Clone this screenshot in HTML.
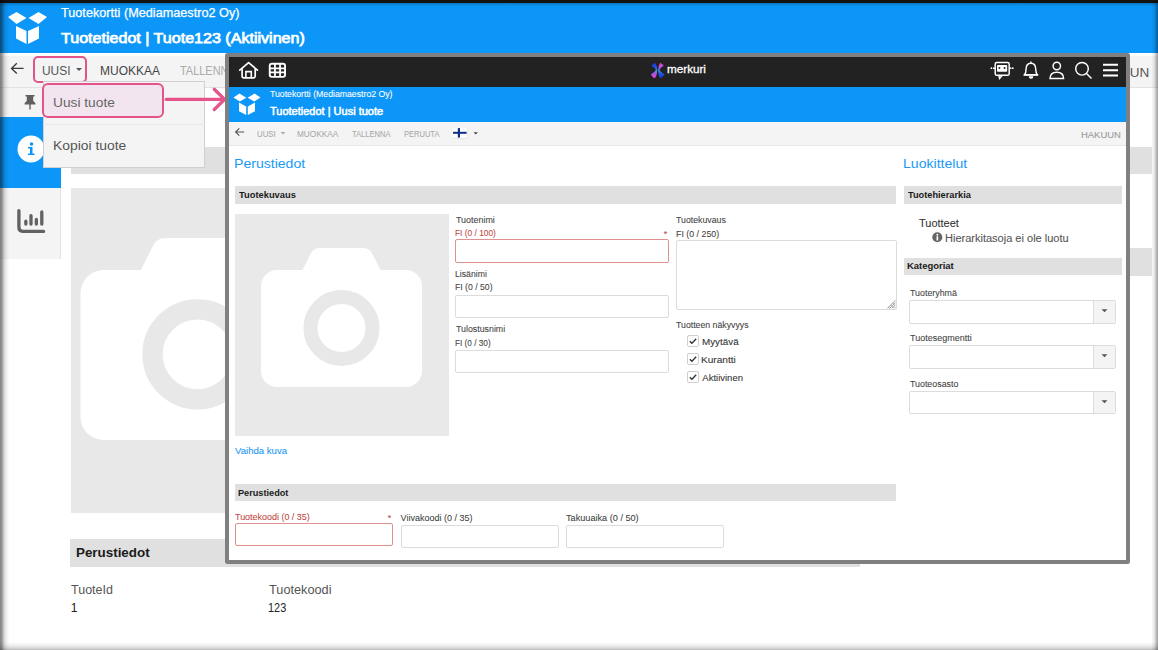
<!DOCTYPE html>
<html><head><meta charset="utf-8"><style>
html,body{margin:0;padding:0;}
body{width:1158px;height:650px;overflow:hidden;position:relative;background:#fff;font-family:"Liberation Sans",sans-serif;}
.a{position:absolute;}
.t{position:absolute;white-space:nowrap;line-height:1;transform-origin:0 0;}
#shL{position:absolute;left:0;top:0;width:10px;height:650px;background:linear-gradient(to right,rgba(0,0,0,.48) 0,rgba(0,0,0,.44) 1.5px,rgba(0,0,0,.2) 3.8px,rgba(0,0,0,.07) 6px,rgba(0,0,0,0) 9.5px);}
#shR{position:absolute;right:0;top:0;width:7px;height:650px;background:linear-gradient(to left,rgba(0,0,0,.38) 0,rgba(0,0,0,.28) 1.5px,rgba(0,0,0,.1) 3.5px,rgba(0,0,0,0) 6.5px);}
#shB{position:absolute;left:0;bottom:0;width:1158px;height:9px;background:linear-gradient(to top,rgba(0,0,0,.28) 0,rgba(0,0,0,.15) 2px,rgba(0,0,0,.05) 5px,rgba(0,0,0,0) 8.5px);}
#shT{position:absolute;left:0;top:3px;width:1158px;height:4px;background:linear-gradient(to bottom,rgba(0,0,0,.2) 0,rgba(0,0,0,0) 3.5px);}
</style></head><body>
<div class="a" style="left:0px;top:0px;width:1158px;height:3px;background:#121212;"></div>
<div class="a" style="left:0px;top:3px;width:1158px;height:50px;background:#0c96f8;"></div>
<svg class="a" style="left:0;top:0" width="60" height="53" viewBox="0 0 60 53">
<path fill="#fff" d="M8 17 L16.5 12 L26.5 18 L16.5 24 Z"/>
<path fill="#fff" d="M28.5 18 L38.5 12 L47 17 L38.5 24 Z"/>
<path fill="#fff" d="M16 26 L26.5 31 L26.5 44 L16 38.5 Z"/>
<path fill="#fff" d="M28 31 L39 26 L39 38.5 L28 44 Z"/>
</svg><div class="t" style="left:60.75px;top:7.00px;font-size:12.5px;color:#fff;transform:scaleX(1.0141);-webkit-text-stroke:0.25px #fff;">Tuotekortti (Mediamaestro2 Oy)</div>
<div class="t" style="left:60.68px;top:30.00px;font-size:15px;color:#fff;transform:scaleX(1.0710);-webkit-text-stroke:0.75px #fff;">Tuotetiedot | Tuote123 (Aktiivinen)</div>
<div class="a" style="left:0px;top:55.5px;width:1158px;height:31.5px;background:#f4f4f4;"></div>
<div class="a" style="left:0px;top:87px;width:1158px;height:1px;background:#e2e2e2;"></div>
<svg class="a" style="left:8px;top:58px" width="20" height="20" viewBox="0 0 20 20">
<path d="M15.6 10.4 H3.8 M8.8 5.2 L3.5 10.4 L8.8 15.5" stroke="#3a3a3a" stroke-width="1.35" fill="none"/></svg><div class="t" style="left:41.60px;top:65.00px;font-size:12.5px;color:#555;transform:scaleX(0.9550);">UUSI</div>
<svg class="a" style="left:75px;top:68px" width="8" height="4" viewBox="0 0 8 4"><path d="M1 0 L7 0 L4 3 Z" fill="#555"/></svg><div class="a" style="left:33px;top:56px;width:54px;height:26.5px;border:2px solid #e2548a;border-radius:5px;box-sizing:border-box;"></div>
<div class="t" style="left:100.04px;top:65.00px;font-size:12.5px;color:#444;transform:scaleX(0.9593);">MUOKKAA</div>
<div class="t" style="left:180.08px;top:65.00px;font-size:12.5px;color:#aaaaaa;transform:scaleX(0.8757);">TALLENNA</div>
<div class="t" style="left:1092.32px;top:66.00px;font-size:13.5px;color:#555;">HAKUUN</div>
<div class="a" style="left:0px;top:88px;width:61px;height:171px;background:#f4f4f4;border-right:1px solid #e4e4e4;box-sizing:border-box;"></div>
<svg class="a" style="left:22px;top:93px" width="16" height="18" viewBox="0 0 16 18">
<path fill="#606060" d="M3.5 2 H12.5 V3.6 H11.2 V7.8 L13.4 10.2 V11.6 H2.6 V10.2 L4.8 7.8 V3.6 H3.5 Z"/><rect x="7.3" y="11" width="1.4" height="5.5" fill="#606060"/></svg><div class="a" style="left:0px;top:117px;width:61px;height:71px;background:#0c96f8;"></div>
<svg class="a" style="left:17px;top:135px" width="28" height="28" viewBox="0 0 28 28">
<circle cx="14" cy="14" r="13.5" fill="#fff"/>
<circle cx="14.5" cy="9" r="1.8" fill="#0c96f8"/>
<path d="M11 12 H15.5 V18.5 H17.5 V20 H11 V18.5 H13 V13.5 H11 Z" fill="#0c96f8"/></svg><svg class="a" style="left:12px;top:202px" width="40" height="36" viewBox="0 0 40 36">
<g stroke="#626262" stroke-width="3.3" fill="none" stroke-linecap="round">
<path d="M6.9 8.6 V25.6 Q6.9 29.4 10.7 29.4 H31.6"/>
<path d="M13.85 19.2 V22.1 M19 13.6 V22.1 M24.35 17.5 V22.1 M29.8 10 V22.1"/></g></svg><div class="a" style="left:71px;top:147px;width:1081px;height:27px;background:#e0e0e0;"></div>
<div class="a" style="left:1130px;top:248px;width:22px;height:28px;background:#e0e0e0;"></div>
<div class="a" style="left:71px;top:188px;width:254px;height:325px;background:#e8e8e8;"></div>
<svg class="a" style="left:0;top:0;overflow:visible" width="1158" height="650">
<rect x="80.5" y="270.0" width="233.9" height="170.0" rx="23.2" fill="#fff"/>
<path fill="#fff" d="M139.4 272.9 L152.5 246.8 Q156.1 238.0 165.5 238.0 L229.5 238.0 Q238.9 238.0 242.5 246.8 L255.6 272.9 Z"/>
<circle cx="197.5" cy="354.3" r="45.0" fill="none" stroke="#e8e8e8" stroke-width="20.3"/>
</svg><div class="a" style="left:70px;top:539px;width:790px;height:28px;background:#e0e0e0;"></div>
<div class="t" style="left:76.13px;top:546.00px;font-size:13px;color:#1a1a1a;font-weight:bold;transform:scaleX(1.0294);">Perustiedot</div>
<div class="t" style="left:71.45px;top:584.00px;font-size:12px;color:#555;transform:scaleX(1.0423);">TuoteId</div>
<div class="t" style="left:70.80px;top:602.00px;font-size:12px;color:#222;">1</div>
<div class="t" style="left:269.05px;top:584.00px;font-size:12px;color:#555;transform:scaleX(1.0604);">Tuotekoodi</div>
<div class="t" style="left:268.48px;top:602.00px;font-size:12px;color:#222;transform:scaleX(0.9086);">123</div>
<div class="a" style="left:43px;top:81px;width:162px;height:86.5px;background:#f4f4f4;border:1px solid #d0d0d0;box-sizing:border-box;"></div>
<div class="a" style="left:43px;top:124px;width:162px;height:1px;background:#e6e6e6;"></div>
<div class="a" style="left:42px;top:83px;width:122px;height:35px;background:#f3e5ef;border:2px solid #e2548a;border-radius:6px;box-sizing:border-box;"></div>
<div class="t" style="left:52.57px;top:96.00px;font-size:13.3px;color:#666;transform:scaleX(1.0334);">Uusi tuote</div>
<div class="t" style="left:53.29px;top:139.00px;font-size:13px;color:#555;transform:scaleX(1.0669);">Kopioi tuote</div>
<svg class="a" style="left:0;top:0" width="240" height="130" viewBox="0 0 240 130">
<path d="M166.2 99.4 H224" stroke="#e6538a" stroke-width="3.1" fill="none" stroke-linecap="round"/>
<path d="M214.3 89.3 L224.6 99.4 L214.3 109.5" stroke="#e6538a" stroke-width="3.3" fill="none" stroke-linecap="round" stroke-linejoin="round"/></svg><div class="a" style="left:225px;top:53px;width:905px;height:511px;background:#fff;border:4px solid #808080;border-radius:2.5px;box-sizing:border-box;"></div>
<div class="a" style="left:229px;top:57px;width:897px;height:30px;background:#222;"></div>
<svg class="a" style="left:236px;top:59px" width="24" height="22" viewBox="0 0 24 22">
<path d="M3.8 11.2 L12.6 3.6 L21.4 11.2" stroke="#fff" stroke-width="1.7" fill="none" stroke-linecap="round" stroke-linejoin="round"/>
<path d="M6.1 9.5 V17 Q6.1 18.8 7.9 18.8 H17.4 Q19.2 18.8 19.2 17 V9.5" stroke="#fff" stroke-width="1.7" fill="none"/>
<path d="M9.9 18.8 V12.6 H15.3 V18.8" stroke="#fff" stroke-width="1.6" fill="none"/></svg><svg class="a" style="left:267px;top:61px" width="22" height="19" viewBox="0 0 22 19">
<rect x="2.75" y="2.75" width="15.3" height="13.1" rx="2" stroke="#fff" stroke-width="1.9" fill="none"/>
<path d="M7.95 2.5 V16 M13.05 2.5 V16 M2.5 7.4 H18.5 M2.5 11.4 H18.5" stroke="#fff" stroke-width="1.8"/></svg><svg class="a" style="left:648px;top:60px" width="20" height="20" viewBox="0 0 20 20">
<defs><linearGradient id="g1" x1="0" y1="0" x2="0" y2="1"><stop offset="0" stop-color="#1838d8"/><stop offset="0.3" stop-color="#1d55e8"/><stop offset="0.5" stop-color="#3a95f2"/><stop offset="0.72" stop-color="#b050e0"/><stop offset="1" stop-color="#f040c8"/></linearGradient>
<linearGradient id="g2" x1="0" y1="0" x2="0" y2="1"><stop offset="0" stop-color="#f040c8"/><stop offset="0.3" stop-color="#b050e0"/><stop offset="0.5" stop-color="#3a95f2"/><stop offset="0.72" stop-color="#1d55e8"/><stop offset="1" stop-color="#1838d8"/></linearGradient></defs>
<path d="M3.3 5.6 L7.2 2.7 Q9.4 6 9.3 10 Q9.2 14 7.7 17.2 L5.8 18.2 L2.8 14.6 Q7 12 8 9.8 Q6.5 7.6 3.3 5.6 Z" fill="url(#g1)"/>
<path d="M15.9 5.6 L12.2 2.8 Q10 6.2 10.1 10 Q10.3 14 11.4 17.6 L13.4 18.1 L16.6 14.4 Q12.3 12 11.4 9.9 Q12.9 7.6 15.9 5.6 Z" fill="url(#g2)"/></svg><div class="t" style="left:667.04px;top:64.00px;font-size:11.5px;color:#fff;transform:scaleX(1.0163);-webkit-text-stroke:0.3px #fff;">merkuri</div>
<svg class="a" style="left:988px;top:58px" width="140" height="26" viewBox="0 0 140 26">
<g stroke="#fff" stroke-width="1.45" fill="none">
<rect x="7.2" y="4.5" width="14" height="12.8" rx="1.6"/>
<path d="M5 10.2 H7.2 M21.2 10.2 H23.4 M10.8 17.3 L11.6 20.5 L14.2 17.3"/>
<path d="M36.6 16.8 Q38 15.2 38 11.5 Q38 5.2 42.9 5.2 Q47.8 5.2 47.8 11.5 Q47.8 15.2 49.2 16.8 Z M42.9 3.6 V5.2" stroke-linejoin="round"/>
<path d="M35.5 17 H50.3"/>
<circle cx="68.8" cy="8" r="3.7"/>
<path d="M62 20.5 Q62 14.2 68.8 14.2 Q75.6 14.2 75.6 20.5 Z"/>
<circle cx="94" cy="10.8" r="6.3"/>
<path d="M98.5 15.5 L103.5 20.5"/>
</g>
<rect x="9" y="7" width="10.2" height="6.8" rx="0.8" fill="#fff"/>
<circle cx="11.4" cy="10" r="0.95" fill="#222"/><circle cx="16.6" cy="10" r="0.95" fill="#222"/>
<circle cx="3.4" cy="10.2" r="0.9" fill="#fff"/><circle cx="24.8" cy="10.2" r="0.9" fill="#fff"/>
<path d="M40.8 18.3 Q40.8 20.8 43 20.8 Q45.3 20.8 45.3 18.3 Z" fill="#fff"/>
<path d="M115 6.7 H130 M115 12.3 H130 M115 17.5 H130" stroke="#fff" stroke-width="2"/>
</svg><div class="a" style="left:229px;top:87px;width:897px;height:35px;background:#0c96f8;"></div>
<svg class="a" style="left:229px;top:87px" width="36" height="35" viewBox="0 0 36 35">
<path fill="#fff" d="M4.5 10.5 L10.5 6.5 L17.3 10.8 L10.8 14.5 Z"/>
<path fill="#fff" d="M18.7 10.8 L25.5 6.5 L31.5 10.5 L25.2 14.5 Z"/>
<path fill="#fff" d="M10 15.5 L17.2 19.5 L17.2 28 L10 24.3 Z"/>
<path fill="#fff" d="M18.8 19.5 L26 15.5 L26 24.3 L18.8 28 Z"/></svg><div class="t" style="left:270.03px;top:90.00px;font-size:8.3px;color:#fff;-webkit-text-stroke:0.08px #fff;transform:scaleX(1.0486);">Tuotekortti (Mediamaestro2 Oy)</div>
<div class="t" style="left:269.98px;top:107.00px;font-size:10.3px;color:#fff;-webkit-text-stroke:0.08px #fff;transform:scaleX(1.0687);-webkit-text-stroke:0.5px #fff;">Tuotetiedot | Uusi tuote</div>
<div class="a" style="left:229px;top:122px;width:897px;height:23px;background:#f4f4f4;"></div>
<div class="a" style="left:229px;top:145px;width:897px;height:1px;background:#e6e6e6;"></div>
<svg class="a" style="left:233px;top:127px" width="14" height="12" viewBox="0 0 14 12">
<path d="M11.2 5 H3.2 M6.3 1.4 L2.6 5 L6.3 8.6" stroke="#555" stroke-width="1.15" fill="none"/></svg><div class="t" style="left:257.01px;top:130.00px;font-size:9px;color:#aaa;-webkit-text-stroke:0.08px #aaa;transform:scaleX(0.8709);">UUSI</div>
<svg class="a" style="left:280px;top:132px" width="6" height="3" viewBox="0 0 6 3"><path d="M0.5 0 L5.5 0 L3 2.5 Z" fill="#aaa"/></svg><div class="t" style="left:297.14px;top:130.00px;font-size:9px;color:#aaa;-webkit-text-stroke:0.08px #aaa;transform:scaleX(0.9146);">MUOKKAA</div>
<div class="t" style="left:352.05px;top:130.00px;font-size:9px;color:#aaa;-webkit-text-stroke:0.08px #aaa;transform:scaleX(0.8416);">TALLENNA</div>
<div class="t" style="left:403.90px;top:130.00px;font-size:9px;color:#aaa;-webkit-text-stroke:0.08px #aaa;transform:scaleX(0.8369);">PERUUTA</div>
<svg class="a" style="left:452px;top:127px" width="17" height="13" viewBox="0 0 17 13">
<rect x="1.4" y="1.6" width="14.6" height="10.2" fill="#e2e2e2" opacity="0.8"/>
<rect x="0.7" y="0.8" width="14.4" height="10" fill="#fff"/>
<rect x="5.8" y="1.1" width="2.2" height="9.4" fill="#0d2f86"/>
<rect x="1" y="4.8" width="13.6" height="2" fill="#0d2f86"/></svg><svg class="a" style="left:472.5px;top:131.5px" width="6" height="3" viewBox="0 0 6 3"><path d="M0.6 0.2 L4.9 0.2 L2.75 2.5 Z" fill="#444"/></svg><div class="t" style="left:1080.94px;top:130.00px;font-size:9.7px;color:#999;-webkit-text-stroke:0.08px #999;transform:scaleX(0.9751);">HAKUUN</div>
<div class="t" style="left:234.27px;top:157.00px;font-size:13.3px;color:#1a9af5;transform:scaleX(1.0575);">Perustiedot</div>
<div class="t" style="left:902.97px;top:157.00px;font-size:13.3px;color:#1a9af5;transform:scaleX(1.0580);">Luokittelut</div>
<div class="a" style="left:235px;top:186px;width:661px;height:18px;background:#e0e0e0;"></div>
<div class="t" style="left:239.01px;top:190.00px;font-size:9.5px;color:#1a1a1a;font-weight:bold;transform:scaleX(0.9821);">Tuotekuvaus</div>
<div class="a" style="left:903.5px;top:186px;width:218.5px;height:18px;background:#e0e0e0;"></div>
<div class="t" style="left:908.31px;top:190.00px;font-size:9.5px;color:#1a1a1a;font-weight:bold;transform:scaleX(0.9700);">Tuotehierarkia</div>
<div class="a" style="left:235px;top:214px;width:214px;height:222px;background:#e9e9e9;"></div>
<svg class="a" style="left:0;top:0;overflow:visible" width="1158" height="650">
<rect x="261.0" y="270.0" width="161.0" height="117.0" rx="16.0" fill="#fff"/>
<path fill="#fff" d="M301.5 272.0 L310.5 254.0 Q313.0 248.0 319.5 248.0 L363.5 248.0 Q370.0 248.0 372.5 254.0 L381.5 272.0 Z"/>
<circle cx="341.5" cy="328.0" r="31.0" fill="none" stroke="#e8e8e8" stroke-width="14.0"/>
</svg><div class="t" style="left:235.25px;top:447.00px;font-size:8.5px;color:#1d98f3;-webkit-text-stroke:0.08px #1d98f3;transform:scaleX(1.1277);">Vaihda kuva</div>
<div class="t" style="left:455.82px;top:216.00px;font-size:8.5px;color:#444;-webkit-text-stroke:0.08px #444;transform:scaleX(1.0482);">Tuotenimi</div>
<div class="t" style="left:455.33px;top:229.00px;font-size:9px;color:#c24a48;-webkit-text-stroke:0.08px #c24a48;transform:scaleX(0.9287);">FI (0 / 100)</div>
<div class="t" style="left:663.66px;top:230.00px;font-size:9px;color:#c24a48;-webkit-text-stroke:0.08px #c24a48;">*</div>
<div class="a" style="left:455px;top:239px;width:214px;height:23.5px;background:#fff;border:1px solid #e0908f;border-radius:2px;box-sizing:border-box;"></div>
<div class="t" style="left:455.30px;top:270.00px;font-size:8.5px;color:#444;-webkit-text-stroke:0.08px #444;transform:scaleX(1.0227);">Lisänimi</div>
<div class="t" style="left:455.31px;top:283.00px;font-size:9px;color:#444;-webkit-text-stroke:0.08px #444;transform:scaleX(0.9626);">FI (0 / 50)</div>
<div class="a" style="left:455px;top:294.5px;width:214px;height:23.5px;background:#fff;border:1px solid #dcdcdc;border-radius:2px;box-sizing:border-box;"></div>
<div class="t" style="left:455.82px;top:325.00px;font-size:8.5px;color:#444;-webkit-text-stroke:0.08px #444;transform:scaleX(1.0372);">Tulostusnimi</div>
<div class="t" style="left:455.34px;top:339.00px;font-size:9px;color:#444;-webkit-text-stroke:0.08px #444;transform:scaleX(0.9149);">FI (0 / 30)</div>
<div class="a" style="left:455px;top:349.8px;width:214px;height:23.599999999999966px;background:#fff;border:1px solid #dcdcdc;border-radius:2px;box-sizing:border-box;"></div>
<div class="t" style="left:676.13px;top:216.00px;font-size:9px;color:#444;-webkit-text-stroke:0.08px #444;transform:scaleX(0.9721);">Tuotekuvaus</div>
<div class="t" style="left:675.59px;top:230.00px;font-size:9px;color:#444;-webkit-text-stroke:0.08px #444;transform:scaleX(0.9801);">FI (0 / 250)</div>
<div class="a" style="left:675.9px;top:240.1px;width:220.70000000000005px;height:69.50000000000003px;background:#fff;border:1px solid #dcdcdc;border-radius:2px;box-sizing:border-box;"></div>
<svg class="a" style="left:886px;top:299px" width="10" height="10" viewBox="0 0 10 10">
<path d="M1.3 9.4 L9.4 1.3 M3.6 9.4 L9.4 3.6 M5.9 9.4 L9.4 5.9 M8.1 9.4 L9.4 8.1" stroke="#7a7a7a" stroke-width="0.75"/>
<path d="M2.6 8 L4 9.4 M4.6 6 L7.4 8.8 M6.6 4 L9 6.4" stroke="#9a9a9a" stroke-width="0.6"/></svg><div class="t" style="left:676.43px;top:321.00px;font-size:9px;color:#444;-webkit-text-stroke:0.08px #444;transform:scaleX(0.9716);">Tuotteen näkyvyys</div>
<div class="a" style="left:687px;top:334.5px;width:12px;height:12.0px;background:#fff;border:1px solid #cfcfcf;border-radius:2px;box-sizing:border-box;"></div>
<svg class="a" style="left:687px;top:334.5px" width="12" height="12" viewBox="0 0 12 12"><path d="M2.8 6.2 L4.9 8.3 L9.2 3.8" stroke="#333" stroke-width="1.3" fill="none"/></svg>
<div class="t" style="left:701.51px;top:337.00px;font-size:9.5px;color:#333;-webkit-text-stroke:0.08px #333;transform:scaleX(1.0353);">Myytävä</div>
<div class="a" style="left:687px;top:352.5px;width:12px;height:12.0px;background:#fff;border:1px solid #cfcfcf;border-radius:2px;box-sizing:border-box;"></div>
<svg class="a" style="left:687px;top:352.5px" width="12" height="12" viewBox="0 0 12 12"><path d="M2.8 6.2 L4.9 8.3 L9.2 3.8" stroke="#333" stroke-width="1.3" fill="none"/></svg>
<div class="t" style="left:701.49px;top:355.00px;font-size:9.5px;color:#333;-webkit-text-stroke:0.08px #333;transform:scaleX(1.0622);">Kurantti</div>
<div class="a" style="left:687px;top:370.5px;width:12px;height:12.0px;background:#fff;border:1px solid #cfcfcf;border-radius:2px;box-sizing:border-box;"></div>
<svg class="a" style="left:687px;top:370.5px" width="12" height="12" viewBox="0 0 12 12"><path d="M2.8 6.2 L4.9 8.3 L9.2 3.8" stroke="#333" stroke-width="1.3" fill="none"/></svg>
<div class="t" style="left:702.30px;top:373.00px;font-size:9.5px;color:#333;-webkit-text-stroke:0.08px #333;">Aktiivinen</div>
<div class="t" style="left:919.08px;top:219.00px;font-size:10px;color:#333;-webkit-text-stroke:0.08px #333;transform:scaleX(1.0957);">Tuotteet</div>
<svg class="a" style="left:932px;top:232px" width="11" height="11" viewBox="0 0 11 11">
<circle cx="5.3" cy="5.3" r="5" fill="#666"/><rect x="4.5" y="4.3" width="1.7" height="4.2" fill="#fff"/><circle cx="5.35" cy="2.8" r="0.95" fill="#fff"/></svg><div class="t" style="left:945.42px;top:234.00px;font-size:10px;color:#555;-webkit-text-stroke:0.08px #555;transform:scaleX(1.1011);">Hierarkitasoja ei ole luotu</div>
<div class="a" style="left:903.5px;top:257.5px;width:218.5px;height:17.5px;background:#e0e0e0;"></div>
<div class="t" style="left:907.09px;top:262.00px;font-size:9px;color:#1a1a1a;font-weight:bold;transform:scaleX(1.0506);">Kategoriat</div>
<div class="t" style="left:909.52px;top:289.00px;font-size:8.5px;color:#444;-webkit-text-stroke:0.08px #444;transform:scaleX(1.0415);">Tuoteryhmä</div>
<div class="a" style="left:909.3px;top:300px;width:206.70000000000005px;height:24px;background:#fff;border:1px solid #dcdcdc;border-radius:2px;box-sizing:border-box;"></div>
<div class="a" style="left:1092.8px;top:301px;width:22.200000000000045px;height:22px;background:#f4f4f4;border-left:1px solid #dcdcdc;border-radius:0 2px 2px 0;box-sizing:border-box;"></div>
<svg class="a" style="left:1101px;top:309.0px" width="7" height="4" viewBox="0 0 7 4"><path d="M0.5 0.3 L6.5 0.3 L3.5 3.3 Z" fill="#555"/></svg>
<div class="t" style="left:909.52px;top:334.00px;font-size:8.5px;color:#444;-webkit-text-stroke:0.08px #444;transform:scaleX(1.0600);">Tuotesegmentti</div>
<div class="a" style="left:909.3px;top:345.3px;width:206.70000000000005px;height:23.69999999999999px;background:#fff;border:1px solid #dcdcdc;border-radius:2px;box-sizing:border-box;"></div>
<div class="a" style="left:1092.8px;top:346.3px;width:22.200000000000045px;height:21.69999999999999px;background:#f4f4f4;border-left:1px solid #dcdcdc;border-radius:0 2px 2px 0;box-sizing:border-box;"></div>
<svg class="a" style="left:1101px;top:354.1px" width="7" height="4" viewBox="0 0 7 4"><path d="M0.5 0.3 L6.5 0.3 L3.5 3.3 Z" fill="#555"/></svg>
<div class="t" style="left:909.52px;top:380.00px;font-size:8.5px;color:#444;-webkit-text-stroke:0.08px #444;transform:scaleX(1.0404);">Tuoteosasto</div>
<div class="a" style="left:909.3px;top:391px;width:206.70000000000005px;height:23px;background:#fff;border:1px solid #dcdcdc;border-radius:2px;box-sizing:border-box;"></div>
<div class="a" style="left:1092.8px;top:392px;width:22.200000000000045px;height:21px;background:#f4f4f4;border-left:1px solid #dcdcdc;border-radius:0 2px 2px 0;box-sizing:border-box;"></div>
<svg class="a" style="left:1101px;top:399.5px" width="7" height="4" viewBox="0 0 7 4"><path d="M0.5 0.3 L6.5 0.3 L3.5 3.3 Z" fill="#555"/></svg>
<div class="a" style="left:235px;top:483.5px;width:661px;height:17.69999999999999px;background:#e0e0e0;"></div>
<div class="t" style="left:238.30px;top:489.00px;font-size:9px;color:#1a1a1a;font-weight:bold;transform:scaleX(1.0179);">Perustiedot</div>
<div class="t" style="left:234.82px;top:513.00px;font-size:9px;color:#c24a48;-webkit-text-stroke:0.08px #c24a48;transform:scaleX(0.9936);">Tuotekoodi (0 / 35)</div>
<div class="t" style="left:387.67px;top:514.00px;font-size:9px;color:#c24a48;-webkit-text-stroke:0.08px #c24a48;">*</div>
<div class="a" style="left:235px;top:523.3px;width:158.39999999999998px;height:23.200000000000045px;background:#fff;border:1px solid #e0908f;border-radius:2px;box-sizing:border-box;"></div>
<div class="t" style="left:400.55px;top:514.00px;font-size:9px;color:#444;-webkit-text-stroke:0.08px #444;">Viivakoodi (0 / 35)</div>
<div class="a" style="left:400.6px;top:524.8px;width:158.0px;height:23.600000000000023px;background:#fff;border:1px solid #dcdcdc;border-radius:2px;box-sizing:border-box;"></div>
<div class="t" style="left:565.72px;top:514.00px;font-size:9px;color:#444;-webkit-text-stroke:0.08px #444;transform:scaleX(1.0158);">Takuuaika (0 / 50)</div>
<div class="a" style="left:565.9px;top:524.8px;width:158.10000000000002px;height:23.600000000000023px;background:#fff;border:1px solid #dcdcdc;border-radius:2px;box-sizing:border-box;"></div>
<div id="shT"></div><div id="shL"></div><div id="shR"></div><div id="shB"></div>
</body></html>
